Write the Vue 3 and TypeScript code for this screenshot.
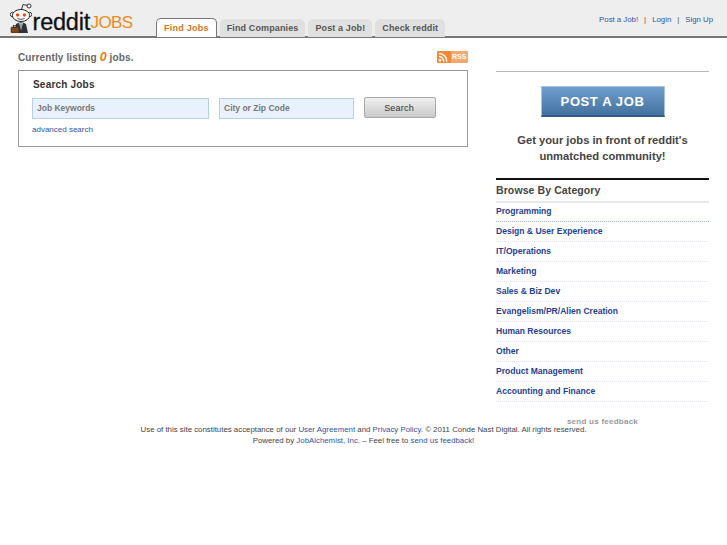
<script setup lang="ts">
const tabs: string[] = ['Find Companies', 'Post a Job!', 'Check reddit']
const categories: string[] = ['Programming', 'Design & User Experience', 'IT/Operations', 'Marketing', 'Sales & Biz Dev', 'Evangelism/PR/Alien Creation', 'Human Resources', 'Other', 'Product Management', 'Accounting and Finance']
</script>

<template>
  <div class="page">
    <header class="top">
      <div class="logo">
        <svg class="alien" width="22" height="31" viewBox="0 0 22 31">
          <path d="M11 9 L13 2.5 L18 3.5" fill="none" stroke="#333" stroke-width="1" />
          <circle cx="19" cy="4" r="2" fill="#fff" stroke="#333" />
          <circle cx="2.5" cy="12.5" r="2.2" fill="#fff" stroke="#333" />
          <circle cx="19.5" cy="12.5" r="2.2" fill="#fff" stroke="#333" />
          <ellipse cx="11" cy="13.5" rx="8.6" ry="6" fill="#fff" stroke="#222" />
          <circle cx="7.6" cy="13" r="1.7" fill="#f04a10" />
          <circle cx="14.4" cy="13" r="1.7" fill="#f04a10" />
          <path d="M7.5 16.5 Q11 18.4 14.5 16.5" fill="none" stroke="#555" />
          <path d="M5 31 L6 22 Q11 18.5 16 22 L18 31 Z" fill="#2f3438" />
          <path d="M9 21 L11 28 L13 21 Z" fill="#d8dce0" />
          <path d="M10.4 21.5 L11.6 21.5 L11.3 27 L10.7 27 Z" fill="#3c5a85" />
          <rect x="1" y="25" width="8" height="6" rx="1" fill="#7a4a22" stroke="#3a2410" stroke-width=".6" />
          <rect x="3.5" y="23.5" width="3" height="2" fill="none" stroke="#3a2410" stroke-width=".7" />
        </svg>
        <span class="word">reddit</span><span class="jobs">JOBS</span>
      </div>
      <nav class="tabs">
        <a class="tab active">Find Jobs</a>
        <a v-for="t in tabs" :key="t" class="tab">{{ t }}</a>
      </nav>
      <div class="user">
        <a>Post a Job!</a><span class="sep">|</span><a>Login</a><span class="sep">|</span><a>Sign Up</a>
      </div>
    </header>

    <div class="body">
      <main class="main">
        <div class="listing">
          <span>Currently listing <b class="zero">0</b> jobs.</span>
          <span class="rss">
            <svg width="13" height="12" viewBox="0 0 13 12">
              <circle cx="3" cy="9.4" r="1.3" fill="#fff" />
              <path d="M2 5.6 A4.8 4.8 0 0 1 6.8 10.8 M2 2.6 A7.8 7.8 0 0 1 9.8 10.8" fill="none" stroke="#fff" stroke-width="1.5" />
            </svg>
            <span class="rss-text">RSS</span>
          </span>
        </div>
        <section class="search">
          <h2>Search Jobs</h2>
          <div class="fields">
            <div class="field keywords">Job Keywords</div>
            <div class="field city">City or Zip Code</div>
            <button class="btn" type="button">Search</button>
          </div>
          <a class="advanced">advanced search</a>
        </section>
      </main>

      <aside class="side">
        <div class="cta-wrap"><a class="cta">POST A JOB</a></div>
        <p class="pitch">Get your jobs in front of reddit's<br />unmatched community!</p>
        <h3 class="browse">Browse By Category</h3>
        <ul class="cats">
          <li v-for="(c, i) in categories" :key="c" :class="{ first: i === 0 }"><a>{{ c }}</a></li>
        </ul>
        <div class="feedback">send us feedback</div>
      </aside>
    </div>

    <footer class="foot">
      <div>Use of this site constitutes acceptance of our <a>User Agreement</a> and <a>Privacy Policy</a>. © 2011 Conde Nast Digital. All rights reserved.</div>
      <div>Powered by <a>JobAlchemist, Inc.</a> – Feel free to <a>send us feedback</a>!</div>
    </footer>
  </div>
</template>

<style>
html, body { margin: 0; background: #fff; }
</style>

<style scoped>
.page {
  width: 727px;
  min-height: 545px;
  font-family: "Liberation Sans", Arial, sans-serif;
  color: #333;
  overflow: hidden;
}
a { color: #2f55a4; }
.top {
  height: 36px;
  background: #eeeeee;
  border-bottom: 2px solid #777;
  display: flex;
  align-items: flex-end;
  position: relative;
}
.logo {
  width: 146px;
  margin-left: 10px;
  height: 33px;
  display: flex;
  align-items: flex-end;
  white-space: nowrap;
  flex: none;
}
.alien { flex: none; margin-bottom: 3px; }
.word {
  font-size: 23.5px;
  line-height: 30px;
  color: #111;
  letter-spacing: -0.2px;
  margin-left: 0.5px;
  margin-bottom: -1px;
  -webkit-text-stroke: 0.3px #111;
}
.jobs {
  font-size: 17px;
  line-height: 30px;
  color: #ee8a1c;
  margin-left: 0.5px;
  margin-bottom: -2px;
  letter-spacing: -0.6px;
}
.tabs {
  display: flex;
  gap: 3px;
  height: 18px;
  margin-bottom: -1px;
}
.tab {
  background: #e0e0e0;
  color: #555;
  font-size: 9px;
  font-weight: bold;
  letter-spacing: 0.12px;
  line-height: 18px;
  padding: 0 7px;
  border-radius: 5px 5px 0 0;
}
.tab.active {
  background: #fff;
  color: #d4731a;
  border: 1px solid #777;
  border-bottom: none;
  margin-top: -1px;
  padding-bottom: 1px;
  line-height: 18px;
  letter-spacing: 0.25px;
}
.user {
  position: absolute;
  right: 14px;
  top: 14px;
  font-size: 7.8px;
  line-height: 11px;
}
.sep { margin: 0 6px; color: #555; }
.body {
  display: flex;
  align-items: flex-start;
  padding: 0 18px;
  gap: 28px;
}
.main { width: 450px; flex: none; }
.listing {
  box-sizing: border-box;
  height: 32px;
  padding-top: 5px;
  display: flex;
  justify-content: space-between;
  align-items: center;
  font-size: 10px;
  font-weight: bold;
  color: #666;
  letter-spacing: 0.12px;
}
.zero { color: #ea7d12; font-style: italic; font-size: 12.5px; }
.rss {
  width: 31px;
  height: 12px;
  background: linear-gradient(90deg, #ef8b36 0 14px, #f5a86a 14px);
  border-radius: 1px;
  display: flex;
  align-items: center;
  gap: 2px;
  overflow: hidden;
}
.rss-text { font-size: 7px; color: #fff; letter-spacing: 0; font-weight: bold; }
.search {
  box-sizing: border-box;
  height: 77px;
  border: 1px solid #999;
  padding: 7px 13px 0;
}
.search h2 {
  margin: 0 0 7px 1px;
  font-size: 10px;
  line-height: 13px;
  color: #333;
  letter-spacing: 0.2px;
}
.fields { display: flex; align-items: flex-start; }
.field {
  box-sizing: border-box;
  height: 21px;
  background: #e9f2fc;
  border: 1px solid #b6d0ea;
  color: #777;
  font-size: 8.5px;
  font-weight: bold;
  line-height: 19px;
  padding: 0 4px;
}
.keywords { width: 177px; margin-right: 10px; }
.city { width: 135px; margin-right: 10px; }
.btn {
  box-sizing: border-box;
  width: 72px;
  height: 21px;
  margin-top: -1px;
  padding: 0 2px 0 0;
  font: 9px "Liberation Sans", Arial, sans-serif;
  letter-spacing: 0.2px;
  color: #333;
  background: linear-gradient(#f0f0f0, #c9c9c9);
  border: 1px solid #a8a8a8;
  border-radius: 2px;
}
.advanced { display: block; margin-top: 5px; font-size: 8px; line-height: 11px; }
.side { width: 213px; flex: none; padding-top: 33px; }
.cta-wrap {
  border-top: 1px solid #bbb;
  padding-top: 14px;
  display: flex;
  justify-content: center;
}
.cta {
  box-sizing: border-box;
  width: 124px;
  height: 31px;
  background: linear-gradient(#6f9fce, #44729f);
  border: 1px solid #a9c4df;
  border-bottom: 2px solid #345b85;
  color: #fff;
  font-size: 13px;
  font-weight: bold;
  line-height: 29px;
  text-align: center;
  letter-spacing: 0.6px;
}
.pitch {
  margin: 15px 0 14px;
  text-align: center;
  font-size: 11.2px;
  line-height: 16px;
  font-weight: bold;
  color: #444;
}
.browse {
  margin: 0;
  border-top: 2px solid #111;
  border-bottom: 2px solid #e8e8e8;
  font-size: 10.5px;
  line-height: 20px;
  padding-bottom: 1px;
  color: #444;
  letter-spacing: 0.1px;
}
.cats { list-style: none; margin: 0; padding: 0; }
.cats li {
  box-sizing: border-box;
  height: 20px;
  font-size: 8.55px;
  font-weight: bold;
  line-height: 18px;
  border-bottom: 1px dotted #e4e8ee;
}
.cats a { color: #1f4190; }
.cats li.first { height: 19px; line-height: 16px; border-bottom-color: #aac0dc; }
.feedback {
  margin-top: 14px;
  text-align: center;
  font-size: 8px;
  font-weight: bold;
  line-height: 12px;
  color: #999;
  letter-spacing: 0.25px;
}
.foot {
  margin-top: -4px;
  text-align: center;
  font-size: 7.85px;
  line-height: 11px;
  color: #444;
}
</style>
